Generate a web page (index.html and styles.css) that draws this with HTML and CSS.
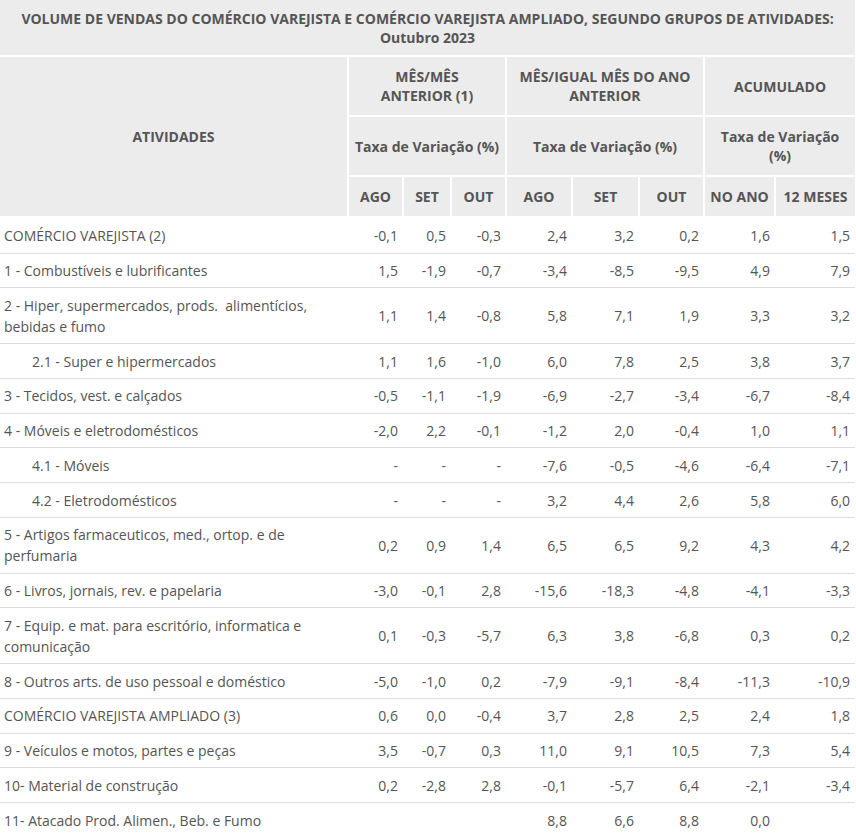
FILE: index.html
```html
<!DOCTYPE html>
<html lang="pt-BR">
<head>
<meta charset="utf-8">
<title>Volume de vendas do comércio varejista</title>
<link rel="stylesheet" href="styles.css">
</head>
<body>
<table class="pmc">
  <colgroup>
    <col class="c-act">
    <col class="c-m1"><col class="c-m2"><col class="c-m3">
    <col class="c-a1"><col class="c-a2"><col class="c-a3">
    <col class="c-y1"><col class="c-y2">
  </colgroup>
  <thead>
    <tr><th class="title" colspan="9">VOLUME DE VENDAS DO COMÉRCIO VAREJISTA E COMÉRCIO VAREJISTA AMPLIADO, SEGUNDO GRUPOS DE ATIVIDADES:<br>Outubro 2023</th></tr>
    <tr>
      <th rowspan="3" class="first">ATIVIDADES</th>
      <th colspan="3">MÊS/MÊS<br>ANTERIOR (1)</th>
      <th colspan="3">MÊS/IGUAL MÊS DO ANO ANTERIOR</th>
      <th colspan="2" class="last">ACUMULADO</th>
    </tr>
    <tr>
      <th colspan="3">Taxa de Variação (%)</th>
      <th colspan="3">Taxa de Variação (%)</th>
      <th colspan="2" class="last">Taxa de Variação<br>(%)</th>
    </tr>
    <tr>
      <th>AGO</th><th>SET</th><th>OUT</th>
      <th>AGO</th><th>SET</th><th>OUT</th>
      <th>NO ANO</th><th class="last">12 MESES</th>
    </tr>
  </thead>
  <tbody>
    <tr><td>COMÉRCIO VAREJISTA (2)</td><td>-0,1</td><td>0,5</td><td>-0,3</td><td>2,4</td><td>3,2</td><td>0,2</td><td>1,6</td><td>1,5</td></tr>
    <tr><td>1 - Combustíveis e lubrificantes</td><td>1,5</td><td>-1,9</td><td>-0,7</td><td>-3,4</td><td>-8,5</td><td>-9,5</td><td>4,9</td><td>7,9</td></tr>
    <tr><td>2 - Hiper, supermercados, prods.&nbsp; alimentícios, bebidas e fumo</td><td>1,1</td><td>1,4</td><td>-0,8</td><td>5,8</td><td>7,1</td><td>1,9</td><td>3,3</td><td>3,2</td></tr>
    <tr><td class="sub">2.1 - Super e hipermercados</td><td>1,1</td><td>1,6</td><td>-1,0</td><td>6,0</td><td>7,8</td><td>2,5</td><td>3,8</td><td>3,7</td></tr>
    <tr><td>3 - Tecidos, vest. e calçados</td><td>-0,5</td><td>-1,1</td><td>-1,9</td><td>-6,9</td><td>-2,7</td><td>-3,4</td><td>-6,7</td><td>-8,4</td></tr>
    <tr><td>4 - Móveis e eletrodomésticos</td><td>-2,0</td><td>2,2</td><td>-0,1</td><td>-1,2</td><td>2,0</td><td>-0,4</td><td>1,0</td><td>1,1</td></tr>
    <tr><td class="sub">4.1 - Móveis</td><td>-</td><td>-</td><td>-</td><td>-7,6</td><td>-0,5</td><td>-4,6</td><td>-6,4</td><td>-7,1</td></tr>
    <tr><td class="sub">4.2 - Eletrodomésticos</td><td>-</td><td>-</td><td>-</td><td>3,2</td><td>4,4</td><td>2,6</td><td>5,8</td><td>6,0</td></tr>
    <tr><td>5 - Artigos farmaceuticos, med., ortop. e de perfumaria</td><td>0,2</td><td>0,9</td><td>1,4</td><td>6,5</td><td>6,5</td><td>9,2</td><td>4,3</td><td>4,2</td></tr>
    <tr><td>6 - Livros, jornais, rev. e papelaria</td><td>-3,0</td><td>-0,1</td><td>2,8</td><td>-15,6</td><td>-18,3</td><td>-4,8</td><td>-4,1</td><td>-3,3</td></tr>
    <tr><td>7 - Equip. e mat. para escritório, informatica e comunicação</td><td>0,1</td><td>-0,3</td><td>-5,7</td><td>6,3</td><td>3,8</td><td>-6,8</td><td>0,3</td><td>0,2</td></tr>
    <tr><td>8 - Outros arts. de uso pessoal e doméstico</td><td>-5,0</td><td>-1,0</td><td>0,2</td><td>-7,9</td><td>-9,1</td><td>-8,4</td><td>-11,3</td><td>-10,9</td></tr>
    <tr><td>COMÉRCIO VAREJISTA AMPLIADO (3)</td><td>0,6</td><td>0,0</td><td>-0,4</td><td>3,7</td><td>2,8</td><td>2,5</td><td>2,4</td><td>1,8</td></tr>
    <tr><td>9 - Veículos e motos, partes e peças</td><td>3,5</td><td>-0,7</td><td>0,3</td><td>11,0</td><td>9,1</td><td>10,5</td><td>7,3</td><td>5,4</td></tr>
    <tr><td>10- Material de construção</td><td>0,2</td><td>-2,8</td><td>2,8</td><td>-0,1</td><td>-5,7</td><td>6,4</td><td>-2,1</td><td>-3,4</td></tr>
    <tr><td>11- Atacado Prod. Alimen., Beb. e Fumo</td><td></td><td></td><td></td><td>8,8</td><td>6,6</td><td>8,8</td><td>0,0</td><td></td></tr>
  </tbody>
</table>
</body>
</html>
```
FILE: styles.css
```css
html, body {
  margin: 0;
  padding: 0;
  background: #fff;
}

body {
  font-family: "Open Sans", "DejaVu Sans", sans-serif;
  color: #555;
}

.pmc {
  width: 855px;
  border-collapse: collapse;
  table-layout: fixed;
}

.c-act { width: 348px; }
.c-m1 { width: 55px; }
.c-m2 { width: 48px; }
.c-m3 { width: 55px; }
.c-a1 { width: 66px; }
.c-a2 { width: 67px; }
.c-a3 { width: 65px; }
.c-y1 { width: 71px; }
.c-y2 { width: 80px; }

.pmc th {
  background: #ececec;
  font-size: 14px;
  font-weight: 700;
  line-height: 19px;
  padding: 10px 4px;
  text-align: center;
  vertical-align: middle;
  border: 2px solid #fff;
}

.pmc th.first { border-left: 0; }
.pmc th.last { border-right: 0; }

.pmc th.title {
  font-size: 14px;
  padding: 8.5px 5px;
  border-top: 0;
  border-left: 0;
  border-right: 0;
}

.pmc td {
  font-size: 14px;
  line-height: 21px;
  padding: 6.375px 5px 6.375px 4px;
  text-align: right;
  vertical-align: middle;
  border-bottom: 1px solid #dddddd;
}

.pmc td:first-child {
  text-align: left;
}

.pmc tbody tr:first-child td {
  padding-top: 7.3px;
}

.pmc td.sub {
  padding-left: 32px;
}
```
